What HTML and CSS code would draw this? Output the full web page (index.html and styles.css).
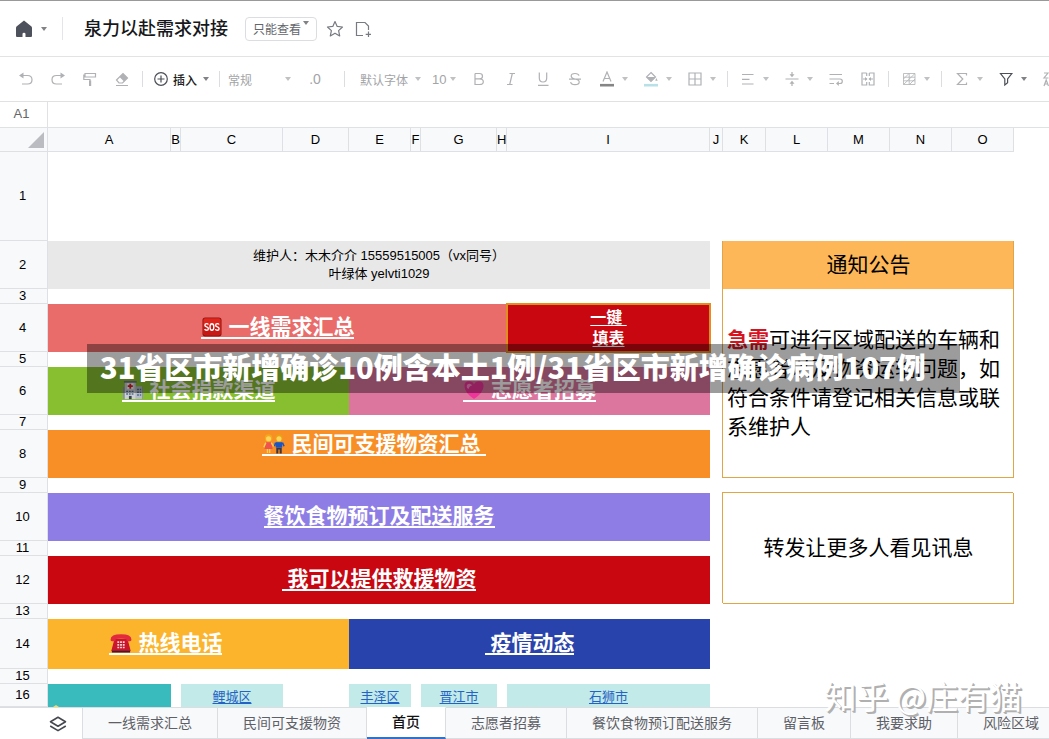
FILE: index.html
```html
<!DOCTYPE html>
<html lang="zh-CN">
<head>
<meta charset="utf-8">
<title>泉力以赴需求对接</title>
<link rel="stylesheet" href="styles.css">
</head>
<body>
<header class="titlebar">
  <button class="home" aria-label="主页">
    <svg width="18" height="18" viewBox="0 0 18 18"><path d="M9 0.5 L16.5 6.5 Q17 7 17 8 V16 Q17 17 16 17 H10.5 V14 Q10.5 12.8 9 12.8 Q7.5 12.8 7.5 14 V17 H2 Q1 17 1 16 V8 Q1 7 1.5 6.5 Z" fill="#4d515c"/></svg>
    <span class="caret dark"></span>
  </button>
  <span class="title-sep"></span>
  <h1 class="doc-title">泉力以赴需求对接</h1>
  <button class="readonly">只能查看<span class="caret dark"></span></button>
  <button class="title-icon" aria-label="收藏">
    <svg width="18" height="18" viewBox="0 0 18 18" fill="none" stroke="#777a80" stroke-width="1.2" stroke-linejoin="round"><path d="M9 1.5 L11.2 6.4 L16.5 7 L12.6 10.6 L13.7 15.9 L9 13.2 L4.3 15.9 L5.4 10.6 L1.5 7 L6.8 6.4 Z"/></svg>
  </button>
  <button class="title-icon" aria-label="添加">
    <svg width="18" height="18" viewBox="0 0 18 18" fill="none" stroke="#777a80" stroke-width="1.2"><path d="M10 15.5 H3.5 V2.5 H12 L15.5 6 V10 M15.5 11.5 V17 M12.7 14.3 H18"/></svg>
  </button>
</header>

<div class="toolbar" role="toolbar" aria-label="工具栏">
  <button class="tool" aria-label="撤销"><svg class="ico" viewBox="0 0 16 16"><path d="M2 4.5 H9.5 Q14 4.5 14 8.7 Q14 13 9.5 13 H4"/><path class="fill" d="M1 4.5 L5.5 1.5 V7.5 Z"/></svg></button>
  <button class="tool" aria-label="重做"><svg class="ico" viewBox="0 0 16 16"><path d="M14 4.5 H6.5 Q2 4.5 2 8.7 Q2 13 6.5 13 H12"/><path class="fill" d="M15 4.5 L10.5 1.5 V7.5 Z"/></svg></button>
  <button class="tool" aria-label="格式刷"><svg class="ico" viewBox="0 0 16 16"><path d="M3 2.5 H13.5 V6 H3 Z M3 4 H1.8 V8.5 H8 V10"/><path class="fill" d="M7 9.5 H9.2 V15 H7 Z"/></svg></button>
  <button class="tool" aria-label="清除格式"><svg class="ico" viewBox="0 0 16 16"><path d="M2.5 9 L9 2.5 L13.5 7 L8.5 12 H5 Z M2 14.5 H14"/><path class="fill" d="M9 2.5 L13.5 7 L10 10.5 L5.5 6 Z"/></svg></button>
  <span class="sep"></span>
  <button class="tool-insert"><svg class="ico dark" viewBox="0 0 16 16"><circle cx="8" cy="8" r="6.3"/><path d="M8 4.5 V11.5 M4.5 8 H11.5"/></svg>插入<span class="caret dark"></span></button>
  <span class="sep"></span>
  <button class="tool-format">常规<span class="caret"></span></button>
  <button class="tool decimals">.0</button>
  <span class="sep"></span>
  <button class="tool-font">默认字体<span class="caret"></span></button>
  <button class="tool-size">10<span class="caret"></span></button>
  <button class="tool" aria-label="粗体"><svg class="ico" viewBox="0 0 16 16"><path d="M4 2.5 H8.5 Q11.5 2.5 11.5 5.2 Q11.5 7.8 8.5 7.8 H4 M8.5 7.8 Q12.3 7.8 12.3 10.7 Q12.3 13.5 8.5 13.5 H4 V2.5"/></svg></button>
  <button class="tool" aria-label="斜体"><svg class="ico" viewBox="0 0 16 16"><path d="M6.5 2.5 H12 M4 13.5 H9.5 M9.3 2.5 L6.7 13.5"/></svg></button>
  <button class="tool" aria-label="下划线"><svg class="ico" viewBox="0 0 16 16"><path d="M4.3 1.5 V7 Q4.3 11 8 11 Q11.7 11 11.7 7 V1.5 M3 14.3 H13.5"/></svg></button>
  <button class="tool" aria-label="删除线"><svg class="ico" viewBox="0 0 16 16"><path d="M12 4.7 Q11.5 2.5 8 2.5 Q4.2 2.5 4.2 5 Q4.2 7.3 8 8 Q12.2 8.7 12.2 11 Q12.2 13.7 8 13.7 Q4 13.7 3.7 11 M2 8.2 H14"/></svg></button>
  <button class="tool-menu" aria-label="文字颜色"><svg class="ico" viewBox="0 0 16 16"><path d="M4 10.5 L8 1 L12 10.5 M5.3 7.5 H10.7"/><path d="M1 14.2 H15" stroke="#858585" stroke-width="2.6"/></svg><span class="caret"></span></button>
  <button class="tool-menu" aria-label="填充颜色"><svg class="ico" viewBox="0 0 16 16"><path d="M8 1.5 L12.5 6 L8 10.5 L3.5 6 Z"/><path class="fill" d="M3.5 6 H12.5 L8 10.5 Z M13.3 7 L14.7 9.8 H12.3 Z"/><path d="M1 14.2 H15" stroke="#b9e0e6" stroke-width="2.6"/></svg><span class="caret"></span></button>
  <button class="tool-menu" aria-label="边框"><svg class="ico" viewBox="0 0 16 16"><path d="M2 2 H14 V14 H2 Z M8 2 V14 M2 8 H14"/></svg><span class="caret"></span></button>
  <span class="sep"></span>
  <button class="tool-menu" aria-label="水平对齐"><svg class="ico" viewBox="0 0 16 16"><path d="M2 3.5 H13.5 M2 8.3 H9.5 M2 13 H13.5"/></svg><span class="caret"></span></button>
  <button class="tool-menu" aria-label="垂直对齐"><svg class="ico" viewBox="0 0 16 16"><path d="M1.5 8 H14.5 M8 1 V4 M8 12 V15"/><path class="fill" d="M5.5 3.3 H10.5 L8 6.2 Z M5.5 12.7 H10.5 L8 9.8 Z"/></svg><span class="caret"></span></button>
  <button class="tool" aria-label="自动换行"><svg class="ico" viewBox="0 0 16 16"><path d="M1.5 3.5 H14 M1.5 8 H12 Q14.3 8 14.3 10.2 Q14.3 12.5 12 12.5 H9 M1.5 12.5 H6"/><path class="fill" d="M8 12.5 L10.8 10 V15 Z"/></svg></button>
  <button class="tool" aria-label="合并单元格"><svg class="ico" viewBox="0 0 16 16"><path d="M6.7 2 H2 V14 H6.7 V11 M6.7 2 V5 M9.3 2 H14 V14 H9.3 V11 M9.3 2 V5 M3 8 H7 M9 8 H13"/><path class="fill" d="M5 6 L7.5 8 L5 10 Z M11 6 L8.5 8 L11 10 Z"/></svg></button>
  <span class="sep"></span>
  <button class="tool-menu" aria-label="条件格式"><svg class="ico thin" viewBox="0 0 16 16"><path d="M2.5 2.5 H14 V13.5 H2.5 Z M2.5 6.2 H14 M2.5 9.8 H14 M8.2 2.5 V13.5 M2.5 13.5 L14 2.5 M2.5 8 L8 2.5 M8.5 13.5 L14 8"/></svg><span class="caret"></span></button>
  <span class="sep"></span>
  <button class="tool-menu" aria-label="求和"><svg class="ico" viewBox="0 0 16 16"><path d="M12.5 4.5 V2.5 H3.5 L8.8 8 L3.5 13.5 H12.5 V11.5"/></svg><span class="caret"></span></button>
  <button class="tool-menu" aria-label="筛选"><svg class="ico dark" viewBox="0 0 16 16"><path d="M2.5 2.5 H13.8 L9.6 8 V11.8 L6.8 14 V8 Z"/></svg><span class="caret dark"></span></button>
  <button class="tool" aria-label="排序"><svg class="ico" viewBox="0 0 16 16"><path d="M2 2 H6 L2 7 H6.5 M2 15 L4.2 9 L6.5 15 M2.8 13 H5.7 M11 2 V14 L13.5 11.5"/></svg></button>
</div>

<div class="formula">
  <label class="name-box" for="formula-input">A1</label>
  <input id="formula-input" class="formula-input" type="text">
</div>

<main class="sheet">
  <table class="grid">
    <colgroup>
      <col class="w-head"><col class="w-a"><col class="w-gap"><col class="w-c"><col class="w-d"><col class="w-std"><col class="w-gap"><col class="w-g"><col class="w-gap"><col class="w-i"><col class="w-j"><col class="w-k"><col class="w-std"><col class="w-std"><col class="w-std"><col class="w-std"><col>
    </colgroup>
    <thead>
      <tr class="letters">
        <th class="corner"><svg width="16" height="16" viewBox="0 0 16 16"><path d="M16 0 V16 H0 Z" fill="#babcc1"/></svg></th>
        <th>A</th><th>B</th><th>C</th><th>D</th><th>E</th><th>F</th><th>G</th><th>H</th><th>I</th><th>J</th><th>K</th><th>L</th><th>M</th><th>N</th><th>O</th><td></td>
      </tr>
    </thead>
    <tbody>
      <tr class="r-first"><th>1</th><td colspan="16"></td></tr>
      <tr class="r-tall"><th>2</th><td colspan="9" class="maintainer">维护人：木木介介 15559515005（vx同号）<br>叶绿体 yelvti1029</td><td></td><td colspan="5" class="notice-title">通知公告</td><td></td></tr>
      <tr class="r-thin"><th>3</th><td colspan="9"></td><td></td><td colspan="5" rowspan="6" class="notice"><b>急需</b>可进行区域配送的车辆和志愿者以及物资运输问题，如符合条件请登记相关信息或联系维护人</td><td></td></tr>
      <tr class="r-tall"><th>4</th>
        <td colspan="8" class="coral"><a class="entry" href="#"><svg class="emoji" viewBox="0 0 22 22"><rect x="0.5" y="0.5" width="21" height="21" rx="3" fill="#8f1512"/><rect x="1.5" y="1.5" width="19" height="18.5" rx="2" fill="#e0251c"/><rect x="1.5" y="10" width="19" height="10" rx="2" fill="#c71813"/><path fill="none" stroke="#fff" stroke-width="1.5" d="M7 8.3 Q6.5 7.3 5 7.3 Q3.2 7.3 3.2 9 Q3.2 10.4 5 10.8 Q7 11.2 7 12.8 Q7 14.6 5 14.6 Q3.3 14.6 3 13.2 M18.7 8.3 Q18.2 7.3 16.8 7.3 Q15 7.3 15 9 Q15 10.4 16.8 10.8 Q18.8 11.2 18.8 12.8 Q18.8 14.6 16.8 14.6 Q15 14.6 14.8 13.2"/><ellipse cx="10.9" cy="11" rx="2.1" ry="3.6" fill="none" stroke="#fff" stroke-width="1.5"/></svg> 一线需求汇总</a></td>
        <td class="red quick"><a href="#">一键 <br>填表</a></td><td></td><td></td></tr>
      <tr class="r-thin"><th>5</th><td colspan="9"></td><td></td><td></td></tr>
      <tr class="r-tall"><th>6</th>
        <td colspan="4" class="green"><a class="entry" href="#"><svg class="emoji" viewBox="0 0 22 22"><path d="M0 8 H22 V21 H0 Z" fill="#8b94a4"/><path d="M14 7 H21 V21 H14 Z" fill="#b3bac5"/><path d="M2 2 H14 V21 H2 Z" fill="#ccd0d6"/><path d="M1 1 H15 V3 H1 Z" fill="#6c7480"/><path d="M4.5 3.5 H11.5 V10 H4.5 Z" fill="#f7f7f7"/><path d="M8 4 V9.5 M5.2 6.7 H10.8" stroke="#d51c24" stroke-width="2"/><path d="M3.5 12.5 H12.5 M3.5 15.5 H12.5 M15.5 10.5 H20 M15.5 13.5 H20 M15.5 16.5 H20" stroke="#4d6a8c" stroke-width="1.6" stroke-dasharray="2 1"/><path d="M6.5 17.5 H9.5 V21 H6.5 Z" fill="#39414d"/></svg> 社会捐款渠道</a></td>
        <td colspan="5" class="pink"><a class="entry" href="#"><svg class="emoji" viewBox="0 0 22 22"><path d="M11 21 Q0.5 13.5 0.5 6.8 Q0.5 1.5 5.5 1.5 Q9.5 1.5 11 5 Q12.5 1.5 16.5 1.5 Q21.5 1.5 21.5 6.8 Q21.5 13.5 11 21 Z" fill="#f0359a"/><path d="M3 7.5 Q3 4 6 4 Q8 4 9 6 Q6 6 5 10 Q3 9 3 7.5 Z" fill="#ff8cc8"/></svg> 志愿者招募</a></td><td></td><td></td></tr>
      <tr class="r-thin"><th>7</th><td colspan="9"></td><td></td><td></td></tr>
      <tr class="r-tall"><th>8</th>
        <td colspan="9" class="orange top"><a class="entry" href="#"><svg class="emoji wide" viewBox="0 0 24 22"><circle cx="6" cy="4.5" r="4.2" fill="#f4a81d"/><circle cx="6" cy="5.3" r="2.8" fill="#ffd55c"/><path d="M3 9 H9 L10.5 16.5 H1.5 Z" fill="#ef5350"/><path d="M3 9.5 L0.8 14.5 M9 9.5 L11.5 13.5 M4.8 16.5 V21 M7.2 16.5 V21" stroke="#ffcf55" stroke-width="1.5"/><circle cx="17.5" cy="4.5" r="4.2" fill="#eba015"/><circle cx="17.5" cy="5.3" r="2.8" fill="#ffd55c"/><path d="M14 9 H21 V15 H14 Z" fill="#1755c4"/><path d="M13.8 9.5 L12.6 13.5 M21.2 9.5 L23 13.5" stroke="#1755c4" stroke-width="1.8"/><path d="M14.5 15 H20.5 V21.5 H18.2 V17 H16.8 V21.5 H14.5 Z" fill="#3a3542"/></svg> 民间可支援物资汇总 </a></td><td></td><td></td></tr>
      <tr class="r-thin"><th>9</th><td colspan="16"></td></tr>
      <tr class="r-tall"><th>10</th><td colspan="9" class="purple"><a class="entry" href="#">餐饮食物预订及配送服务</a></td><td></td><td colspan="5" rowspan="3" class="share">转发让更多人看见讯息</td><td></td></tr>
      <tr class="r-thin"><th>11</th><td colspan="9"></td><td></td><td></td></tr>
      <tr class="r-tall"><th>12</th><td colspan="9" class="red"><a class="entry" href="#"> 我可以提供救援物资</a></td><td></td><td></td></tr>
      <tr class="r-thin"><th>13</th><td colspan="16"></td></tr>
      <tr class="r-phone"><th>14</th>
        <td colspan="4" class="amber"><a class="entry" href="#"><svg class="emoji wide" viewBox="0 0 24 22"><path d="M5 6 H19 L22.5 19 Q22.5 20.5 21 20.5 H3 Q1.5 20.5 1.5 19 Z" fill="#c9162c"/><path d="M0.5 7.5 Q0.5 1.5 12 1.5 Q23.5 1.5 23.5 7.5 Q23.5 9 22 9 H19 Q17.8 9 17.8 6.5 Q12 5 6.2 6.5 Q6.2 9 5 9 H2 Q0.5 9 0.5 7.5 Z" fill="#e2293d"/><path d="M2 19.5 H22 V21.5 H2 Z" fill="#4a1822"/><path d="M8 10 H16 M8 13 H16 M8 16 H16" stroke="#ffd8d8" stroke-width="1.8" stroke-dasharray="2 1"/></svg> 热线电话</a></td>
        <td colspan="5" class="blue"><a class="entry" href="#"> 疫情动态</a></td><td></td><td colspan="6"></td></tr>
      <tr class="r-thin"><th>15</th><td colspan="16"></td></tr>
      <tr class="r-area"><th>16</th><td class="teal"><svg width="6" height="2" viewBox="0 0 6 2"><path d="M0 2 L3 0 L6 2 Z" fill="#f5dc5a"/></svg></td><td></td><td class="area"><a href="#">鲤城区</a></td><td></td><td class="area"><a href="#">丰泽区</a></td><td></td><td class="area"><a href="#">晋江市</a></td><td></td><td class="area"><a href="#">石狮市</a></td><td></td><td colspan="6"></td></tr>
    </tbody>
  </table>
</main>

<nav class="tabs" aria-label="工作表">
  <button class="all-sheets" aria-label="全部工作表"><svg width="18" height="16" viewBox="0 0 18 16" fill="none" stroke="#45494f" stroke-width="1.6" stroke-linejoin="round"><path d="M9 1.2 L16.5 5.7 L9 10.2 L1.5 5.7 Z M1.2 10 L9 14.6 L16.8 10"/></svg></button>
  <button class="tab">一线需求汇总</button><button class="tab">民间可支援物资</button><button class="tab active">首页</button><button class="tab">志愿者招募</button><button class="tab">餐饮食物预订配送服务</button><button class="tab">留言板</button><button class="tab">我要求助</button><button class="tab">风险区域</button>
</nav>

<div class="banner">31省区市新增确诊10例含本土1例/31省区市新增确诊病例107例</div>
<div class="watermark">知乎 @庄有猫</div>
</body>
</html>
```
FILE: styles.css
```css
* { box-sizing: border-box; }

body {
  margin: 0;
  height: 100vh;
  display: flex;
  flex-direction: column;
  position: relative;
  overflow: hidden;
  background: #fff;
  color: #000;
  font-family: "Liberation Sans", "Noto Sans CJK SC", sans-serif;
  font-size: 13px;
}

button {
  border: 0;
  padding: 0;
  background: none;
  font: inherit;
  color: inherit;
  display: flex;
  align-items: center;
  flex: none;
}

.caret {
  width: 0;
  height: 0;
  border: 3px solid transparent;
  border-top: 4px solid #c0c1c3;
  border-bottom: 0;
}
.caret.dark { border-top-color: #808286; }

/* Title bar */
.titlebar {
  flex: none;
  height: 57px;
  display: flex;
  align-items: center;
  padding-left: 15px;
  border-top: 1px solid #999;
  border-bottom: 1px solid #e2e3e5;
}
.home { gap: 8px; }
.title-sep {
  width: 1px;
  height: 23px;
  margin: 0 21px 0 15px;
  background: #e4e5e7;
}
.doc-title {
  margin: 0 17px 0 0;
  font-size: 18px;
  font-weight: 500;
  line-height: 24px;
  color: #16181b;
}
.readonly {
  height: 24px;
  width: 72px;
  padding-left: 7px;
  gap: 2px;
  border: 1px solid #dcdde0;
  border-radius: 4px;
  font-size: 12px;
  color: #62656b;
}
.readonly .caret { margin-bottom: 12px; }
.title-icon { margin-left: 9px; }

/* Toolbar */
.toolbar {
  flex: none;
  height: 45px;
  display: flex;
  align-items: center;
  padding-left: 10px;
  overflow: hidden;
  border-bottom: 1px solid #e0e1e3;
  color: #a3a4a7;
}
.ico {
  width: 16px;
  height: 16px;
  flex: none;
  fill: none;
  stroke: #b0b1b4;
  stroke-width: 1.2;
}
.ico .fill { fill: #b0b1b4; stroke: none; }
.ico.dark { stroke: #4b4f57; }
.ico.thin { stroke-width: 0.8; }
.sep {
  flex: none;
  width: 1px;
  height: 16px;
  margin: 0 4px;
  background: #dcdde0;
}
.tool { width: 32px; height: 32px; justify-content: center; }
.decimals { font-size: 14px; margin-right: 9px; }
.tool-menu { width: 44px; height: 32px; padding-left: 8px; gap: 7px; }
.tool-insert { width: 68px; padding-left: 6px; gap: 4px; font-size: 12px; color: #222; font-weight: 500; }
.tool-insert .caret { margin-left: 2px; }
.tool-format { width: 75px; padding: 0 8px 0 4px; justify-content: space-between; font-size: 12px; }
.tool-font { width: 76px; padding: 0 4px 0 11px; justify-content: space-between; font-size: 12px; }
.tool-size { width: 38px; padding: 0 7px; justify-content: space-between; }

/* Formula bar */
.formula {
  flex: none;
  height: 26px;
  display: flex;
  border-bottom: 1px solid #e0e1e3;
}
.name-box {
  width: 48px;
  padding-right: 4px;
  border-right: 1px solid #e0e1e3;
  color: #666;
  text-align: center;
  line-height: 24px;
}
.formula-input { flex: 1; border: 0; outline: 0; padding: 0 8px; font: inherit; }

/* Sheet */
.sheet { flex: 1; min-height: 0; overflow: hidden; }
.grid {
  width: 100%;
  table-layout: fixed;
  border-spacing: 0;
  text-align: center;
}
.w-head { width: 48px; }
.w-a { width: 123px; }
.w-gap { width: 10px; }
.w-c { width: 102px; }
.w-d { width: 66px; }
.w-std { width: 62px; }
.w-g { width: 76px; }
.w-i { width: 203px; }
.w-j { width: 13px; }
.w-k { width: 43px; }

.grid td, .grid th { padding: 0; }
.grid th {
  background: #f8f9fb;
  border-right: 1px solid #dfe0e3;
  border-bottom: 1px solid #dfe0e3;
  font-weight: 400;
  line-height: 14px;
}
.grid tbody th { padding-right: 2px; }
.letters { height: 24px; }
.grid .corner { text-align: right; vertical-align: bottom; padding: 0 3px 3px 0; }
.corner svg { display: block; margin-left: auto; }
.r-first { height: 89px; }
.r-tall { height: 48px; }
.r-thin { height: 15px; }
.r-phone { height: 50px; }
.r-area { height: 23px; }

.maintainer { background: #e8e8e8; line-height: 18px; }
.notice-title, .notice, .share { font-size: 21px; line-height: 29px; }
.notice-title { background: #fdb758; box-shadow: -1px 0 #e0a548, inset -1px 0 #e0a548; }
.notice { box-shadow: -1px 0 #dfa546, inset -1px -1px #dfa546; }
.share { box-shadow: -1px -1px #dfa546, inset -1px -1px #dfa546; }
.grid .notice-title, .grid .share { padding-bottom: 2px; }
.grid .notice { padding: 0 4px 2px; text-align: left; }
.notice b { color: #d5141f; }

.coral { background: #e96c6a; }
.red { background: #c90711; }
.green { background: #88bf31; }
.pink { background: #dc769e; }
.orange { background: #f88e26; }
.purple { background: #8d7de5; }
.amber { background: #fcb42d; }
.blue { background: #2943ac; }
.teal { background: #39babd; }
.area { background: #c1eae9; }
.grid .teal { vertical-align: bottom; text-align: left; padding-left: 5px; }
.teal svg { display: block; }
.area a { color: #2463c5; text-underline-offset: 2px; }

.entry {
  display: inline-flex;
  align-items: center;
  white-space: pre;
  border-bottom: 2px solid #fff;
  color: #fff;
  font-size: 21px;
  font-weight: 700;
  line-height: 20px;
  text-decoration: none;
  vertical-align: middle;
}
.emoji { width: 22px; height: 20px; flex: none; }
.emoji.wide { width: 24px; }
.grid .top { vertical-align: top; padding: 4px 10px 0 0; }
.grid .amber { padding-right: 66px; }

.quick { box-shadow: 0 0 0 1px #e08e20, inset 0 0 0 1px #e08e20; }
.quick a {
  color: #fff;
  font-size: 16px;
  font-weight: 700;
  line-height: 21px;
  white-space: pre;
  text-underline-offset: 2px;
  text-decoration-skip-ink: none;
}

/* Sheet tabs */
.tabs {
  flex: none;
  height: 32px;
  display: flex;
  overflow: hidden;
}
.all-sheets {
  width: 83px;
  padding-left: 49px;
  border-top: 1px solid #dcdde0;
  border-right: 1px solid #dcdde0;
}
.tab {
  padding: 0 25px 3px;
  border: 1px solid #dcdde0;
  border-left: 0;
  background: #f8f9fb;
  color: #5d6066;
  font-size: 14px;
}
.tab.active {
  background: #fff;
  border-top-color: #fff;
  border-bottom: 2px solid #3370cc;
  color: #111;
  font-weight: 500;
}

/* Overlays */
.banner {
  position: absolute;
  top: 344px;
  left: 87px;
  padding: 0 34px 5px 13px;
  background: rgba(0, 0, 0, 0.39);
  color: #fff;
  font-family: "Noto Sans CJK SC", sans-serif;
  font-size: 29px;
  font-weight: 900;
  line-height: 44px;
  white-space: nowrap;
}
.watermark {
  position: absolute;
  right: 27px;
  bottom: 23px;
  color: #fff;
  font-family: "Noto Sans CJK SC", sans-serif;
  font-size: 32px;
  line-height: 42px;
  text-shadow: 1px 1px 0 #b0b0b0, 2px 2px 0 #b0b0b0;
}
```
